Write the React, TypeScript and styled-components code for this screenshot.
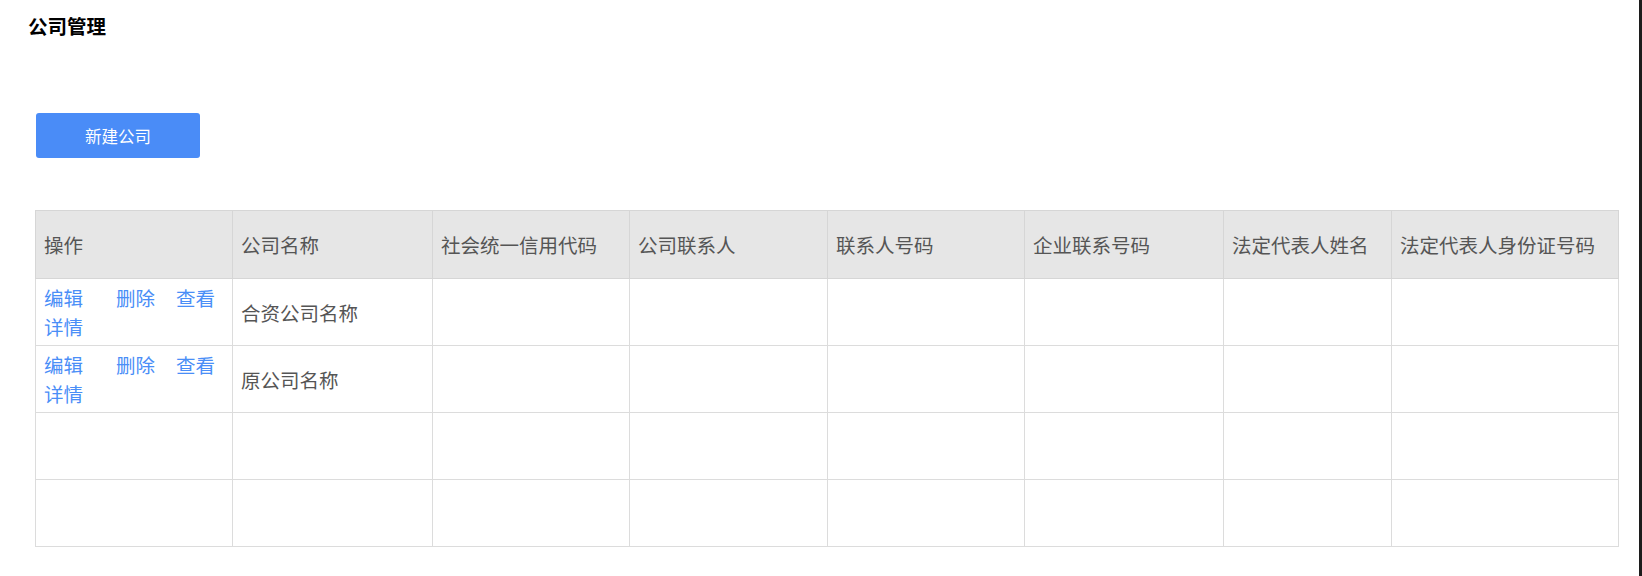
import React from 'react';
import styled, { createGlobalStyle } from 'styled-components';

const GlobalStyle = createGlobalStyle`
    html, body {
        margin: 0;
        padding: 0;
        background: #ffffff;
    }
    body {
        font-family: "Noto Sans CJK SC", "Noto Sans", sans-serif;
        color: #555555;
    }
`

const Frame = styled.div`
    min-height: 100vh;
    box-sizing: border-box;
    border-right: 3px solid #1c1c1c;
    padding: 12px 21px 30px 35px;
`

const Title = styled.h1`
    margin: 0 0 0 -7px;
    font-size: 19.5px;
    line-height: 28px;
    font-weight: 700;
    color: #000000;
`

const Toolbar = styled.div`
    display: flex;
    margin-top: 73px;
    padding-left: 1px;
`

const PrimaryButton = styled.button`
    width: 164px;
    height: 45px;
    border: none;
    border-radius: 3px;
    background: #4a8cf7;
    color: #ffffff;
    font-family: inherit;
    font-size: 16.5px;
    cursor: pointer;
`

const Table = styled.table`
    margin-top: 52px;
    width: 1583px;
    table-layout: fixed;
    border-collapse: collapse;
    border: 1px solid #c9c9c9;
    font-size: 19.5px;
    line-height: 29px;
`

const HeadCell = styled.th`
    height: 67px;
    padding: 0 8px;
    background: #e6e6e6;
    border: 1px solid #d6d6d6;
    color: #555555;
    font-weight: 400;
    text-align: left;
    white-space: nowrap;
`

const Cell = styled.td`
    height: 66px;
    padding: 0 8px;
    border: 1px solid #dcdcdc;
    color: #555555;
    vertical-align: middle;
`

const ActionLink = styled.a<{ gap?: number }>`
    color: #4a8ef7;
    text-decoration: none;
    cursor: pointer;
    margin-right: ${props => props.gap ?? 0}px;
`

const columns = [
    { title: '操作', width: 197 },
    { title: '公司名称', width: 200 },
    { title: '社会统一信用代码', width: 197 },
    { title: '公司联系人', width: 198 },
    { title: '联系人号码', width: 197 },
    { title: '企业联系号码', width: 199 },
    { title: '法定代表人姓名', width: 168 },
    { title: '法定代表人身份证号码', width: 227 },
]

const rows: (string | null)[] = ['合资公司名称', '原公司名称', null, null]

const App = () => {
    return (
        <>
            <GlobalStyle />
            <Frame>
                <Title>公司管理</Title>
                <Toolbar>
                    <PrimaryButton>新建公司</PrimaryButton>
                </Toolbar>
                <Table>
                    <colgroup>
                        {columns.map(c => <col key={c.title} style={{ width: c.width }} />)}
                    </colgroup>
                    <thead>
                        <tr>
                            {columns.map(c => <HeadCell key={c.title}>{c.title}</HeadCell>)}
                        </tr>
                    </thead>
                    <tbody>
                        {rows.map((name, i) => (
                            <tr key={i}>
                                <Cell>
                                    {name && (
                                        <>
                                            <ActionLink gap={33}>编辑</ActionLink>
                                            <ActionLink gap={21}>删除</ActionLink>
                                            <ActionLink>查看详情</ActionLink>
                                        </>
                                    )}
                                </Cell>
                                <Cell>{name}</Cell>
                                {columns.slice(2).map(c => <Cell key={c.title} />)}
                            </tr>
                        ))}
                    </tbody>
                </Table>
            </Frame>
        </>
    )
}

export default App;
